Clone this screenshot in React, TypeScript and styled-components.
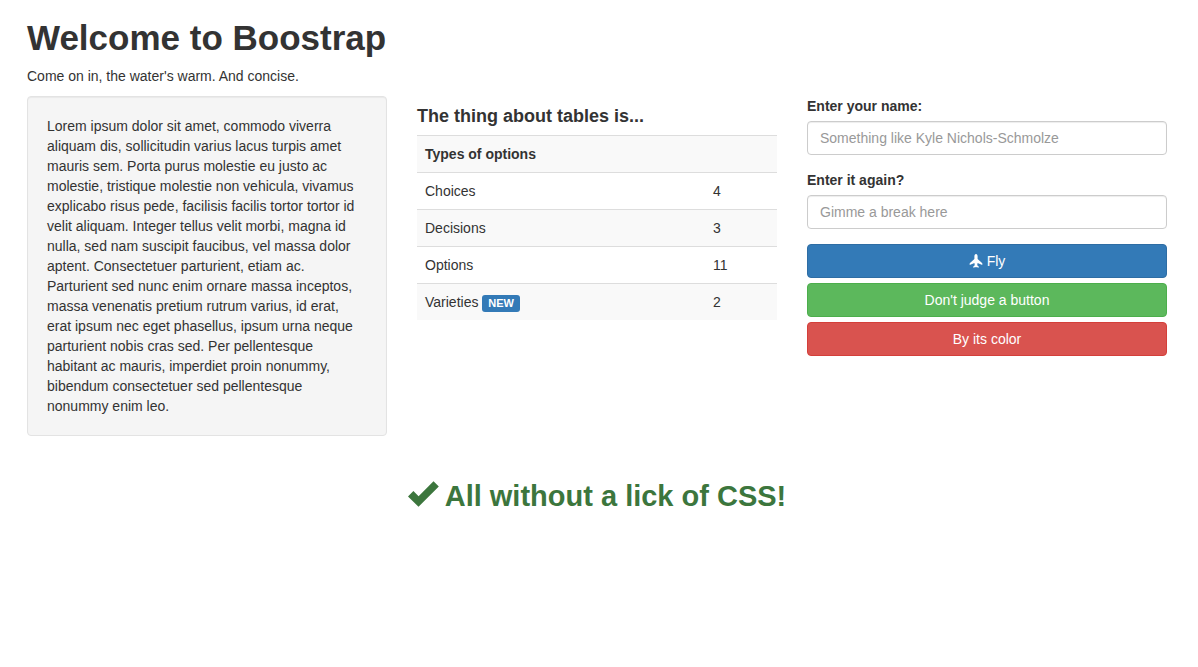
import React from "react";
import styled, { createGlobalStyle } from "styled-components";

const GlobalStyle = createGlobalStyle`
  *, *::before, *::after { box-sizing: border-box; }
  body {
    margin: 0;
    background: #fff;
    color: #333;
    font-family: "Liberation Sans", Arial, sans-serif;
    font-size: 14px;
    line-height: 20px;
  }
`;

const Page = styled.main`
  padding: 18px 31px 40px 27px;
`;

const Title = styled.h1`
  margin: 0 0 8px;
  font-size: 35px;
  line-height: 40px;
  font-weight: 700;
`;

const Intro = styled.p`
  margin: 0 0 10px;
`;

const Columns = styled.div`
  display: grid;
  grid-template-columns: repeat(3, minmax(0, 1fr));
  gap: 30px;
  align-items: start;
`;

const Well = styled.div`
  padding: 19px 24px 19px 19px;
  border: 1px solid #e3e3e3;
  border-radius: 4px;
  background: #f5f5f5;
  box-shadow: inset 0 1px 1px rgba(0, 0, 0, 0.05);
`;

const TableTitle = styled.h4`
  margin: 10px 0 9px;
  font-size: 18px;
  line-height: 20px;
  font-weight: 700;
`;

const Table = styled.table`
  width: 100%;
  table-layout: fixed;
  border-collapse: collapse;

  tr:nth-child(odd) {
    background: #f9f9f9;
  }
`;

const cell = `
  padding: 8px;
  border-top: 1px solid #ddd;
  text-align: left;
`;

const HeadCell = styled.th<{ $width: string }>`
  ${cell}
  width: ${(p) => p.$width};
`;

const Cell = styled.td`
  ${cell}
`;

const Label = styled.span`
  padding: 2px 6px 3px;
  border-radius: 3px;
  background: #337ab7;
  color: #fff;
  font-size: 11px;
  line-height: 11px;
  font-weight: 700;
`;

const Field = styled.div`
  margin-bottom: 15px;
`;

const FieldLabel = styled.label`
  display: block;
  margin-bottom: 5px;
  font-weight: 700;
`;

const Input = styled.input`
  display: block;
  width: 100%;
  height: 34px;
  padding: 6px 12px;
  border: 1px solid #ccc;
  border-radius: 4px;
  background: #fff;
  color: #555;
  font: inherit;
  box-shadow: inset 0 1px 1px rgba(0, 0, 0, 0.075);

  &::placeholder {
    color: #999;
    opacity: 1;
  }
`;

const Buttons = styled.div`
  display: grid;
  gap: 5px;
`;

const Button = styled.button<{ $fill: string; $edge: string }>`
  display: flex;
  align-items: center;
  justify-content: center;
  gap: 4px;
  width: 100%;
  padding: 6px 12px;
  border: 1px solid ${(p) => p.$edge};
  border-radius: 4px;
  background: ${(p) => p.$fill};
  color: #fff;
  font: inherit;
  cursor: pointer;
`;

const Success = styled.h2`
  display: flex;
  align-items: center;
  justify-content: center;
  gap: 6px;
  margin: 42px 0 0;
  color: #3c763d;
  font-size: 29px;
  line-height: 36px;
  font-weight: 700;

  svg {
    margin-bottom: 5px;
  }
`;

const PlaneIcon = () => (
  <svg width="14" height="14" viewBox="0 0 14 14" fill="#fff" aria-hidden="true">
    <path d="M7 0C8.1 0 8.6 1.2 8.6 2.2V4.9L13.3 9.2V11L8.6 8.9L8.2 11.3L9.7 12.6V13.7L7.4 13.1L7 13.8L6.6 13.1L4.3 13.7V12.6L5.8 11.3L5.4 8.9L.7 11V9.2L5.4 4.9V2.2C5.4 1.2 5.9 0 7 0Z" />
  </svg>
);

const CheckIcon = () => (
  <svg width="31" height="26" viewBox="0 0 31 26" fill="currentColor" aria-hidden="true">
    <path d="M0 15.4L5.4 10L10.6 15.2L25.5 .3L30.8 5.6L10.5 25.8Z" />
  </svg>
);

const rows = [
  { name: "Choices", count: 4 },
  { name: "Decisions", count: 3 },
  { name: "Options", count: 11 },
  { name: "Varieties", count: 2, isNew: true },
];

export default function App() {
  return (
    <>
      <GlobalStyle />
      <Page>
        <Title>Welcome to Boostrap</Title>
        <Intro>Come on in, the water's warm. And concise.</Intro>
        <Columns>
          <Well>
            Lorem ipsum dolor sit amet, commodo viverra aliquam dis, sollicitudin varius lacus turpis amet
            mauris sem. Porta purus molestie eu justo ac molestie, tristique molestie non vehicula, vivamus
            explicabo risus pede, facilisis facilis tortor tortor id velit aliquam. Integer tellus velit
            morbi, magna id nulla, sed nam suscipit faucibus, vel massa dolor aptent. Consectetuer
            parturient, etiam ac. Parturient sed nunc enim ornare massa inceptos, massa venenatis pretium
            rutrum varius, id erat, erat ipsum nec eget phasellus, ipsum urna neque parturient nobis cras
            sed. Per pellentesque habitant ac mauris, imperdiet proin nonummy, bibendum consectetuer sed
            pellentesque nonummy enim leo.
          </Well>
          <section>
            <TableTitle>The thing about tables is...</TableTitle>
            <Table>
              <tbody>
                <tr>
                  <HeadCell $width="80%">Types of options</HeadCell>
                  <HeadCell $width="20%" />
                </tr>
                {rows.map((row) => (
                  <tr key={row.name}>
                    <Cell>
                      {row.name}
                      {row.isNew && <> <Label>NEW</Label></>}
                    </Cell>
                    <Cell>{row.count}</Cell>
                  </tr>
                ))}
              </tbody>
            </Table>
          </section>
          <form onSubmit={(e) => e.preventDefault()}>
            <Field>
              <FieldLabel htmlFor="name">Enter your name:</FieldLabel>
              <Input id="name" type="text" placeholder="Something like Kyle Nichols-Schmolze" />
            </Field>
            <Field>
              <FieldLabel htmlFor="name-again">Enter it again?</FieldLabel>
              <Input id="name-again" type="text" placeholder="Gimme a break here" />
            </Field>
            <Buttons>
              <Button type="submit" $fill="#337ab7" $edge="#2e6da4">
                <PlaneIcon />
                Fly
              </Button>
              <Button type="button" $fill="#5cb85c" $edge="#4cae4c">Don't judge a button</Button>
              <Button type="button" $fill="#d9534f" $edge="#d43f3a">By its color</Button>
            </Buttons>
          </form>
        </Columns>
        <Success>
          <CheckIcon />
          All without a lick of CSS!
        </Success>
      </Page>
    </>
  );
}
